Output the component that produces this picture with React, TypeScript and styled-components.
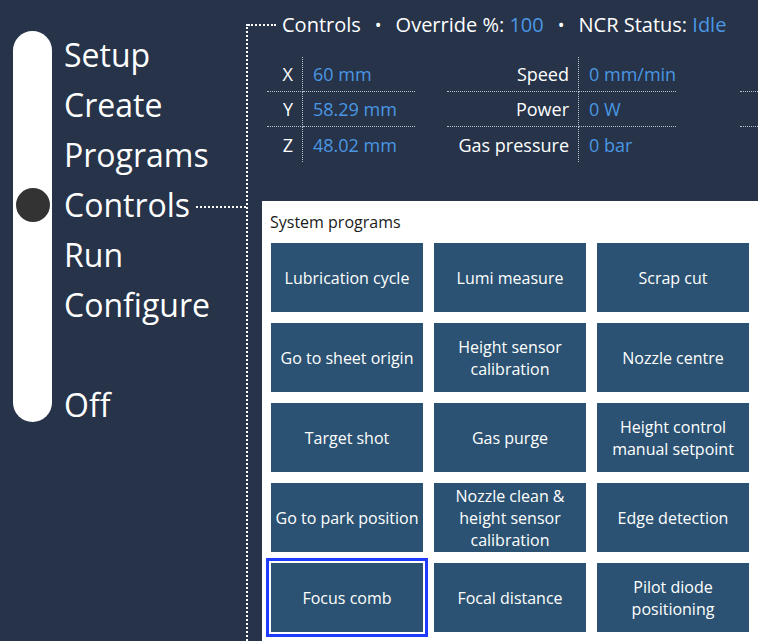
import React from "react";
import styled, { createGlobalStyle } from "styled-components";

const FONT = `"Open Sans", "Noto Sans", "Liberation Sans", sans-serif`;

const Global = createGlobalStyle`
  html, body { margin: 0; padding: 0; background: #263349; }
  body { font-family: ${FONT}; }
  * { box-sizing: border-box; }
`;

const Screen = styled.div`
  display: flex;
  width: 758px;
  height: 641px;
  overflow: hidden;
  background: #263349;
  color: #ffffff;
  font-family: ${FONT};
`;

/* ---------- navigation ---------- */
const Nav = styled.nav`
  display: flex;
  flex: 0 0 246px;
  padding-top: 30px;
`;

const Track = styled.div`
  position: relative;
  flex: 0 0 39px;
  height: 391px;
  margin: 1px 12px 0 13px;
  border-radius: 20px;
  background: #ffffff;
`;

const Knob = styled.div<{ $index: number }>`
  position: absolute;
  left: 3px;
  top: ${(p) => p.$index * 50 + 7}px;
  width: 34px;
  height: 34px;
  border-radius: 50%;
  background: #333333;
`;

const NavList = styled.ul`
  flex: 1;
  margin: 0;
  padding: 0;
  list-style: none;
`;

const NavItem = styled.li<{ $gap?: boolean }>`
  display: flex;
  align-items: center;
  height: 50px;
  margin-top: ${(p) => (p.$gap ? "50px" : "0")};
  font-size: 32px;
  line-height: 50px;
  color: #ffffff;
  white-space: nowrap;
`;

const Connector = styled.span`
  flex: 1;
  margin-left: 6px;
  border-top: 2px dotted #ffffff;
  transform: translateY(2px);
`;

/* ---------- main ---------- */
const Main = styled.main`
  flex: 1;
  display: flex;
  flex-direction: column;
  margin-top: 24px;
  border-left: 2px dotted #ffffff;
  min-width: 0;
`;

const Header = styled.header`
  display: flex;
  align-items: center;
  height: 2px;
  font-size: 20px;
  white-space: nowrap;
  &::before {
    content: "";
    width: 28px;
    margin-right: 6px;
    border-top: 2px dotted #ffffff;
  }
`;

const HeaderItem = styled.span`
  line-height: 26px;
`;

const Bullet = styled.span`
  margin: 0 14px;
  font-size: 18px;
`;

const Value = styled.span`
  color: #4a97e4;
`;

const Readouts = styled.div`
  display: flex;
  gap: 32px;
  margin: 31px 0 0 19px;
  white-space: nowrap;
`;

const Group = styled.div<{ $label: number; $value: number }>`
  display: grid;
  grid-template-columns: ${(p) => `${p.$label}px ${p.$value}px`};
  grid-auto-rows: 35px;
  font-size: 18px;
`;

const Label = styled.div<{ $last?: boolean }>`
  display: flex;
  align-items: center;
  justify-content: flex-end;
  padding-right: 9px;
  border-right: 1px dotted #b8bfca;
  border-bottom: ${(p) => (p.$last ? "none" : "1px dotted #b8bfca")};
`;

const Cell = styled.div<{ $last?: boolean }>`
  display: flex;
  align-items: center;
  padding-left: 10px;
  color: #4a97e4;
  border-bottom: ${(p) => (p.$last ? "none" : "1px dotted #b8bfca")};
`;

const Spacer = styled.div`
  width: 34px;
`;

const Panel = styled.section`
  flex: 1;
  margin: 39px 0 0 14px;
  padding: 10px 0 0 8px;
  background: #ffffff;
  color: #1b1b1b;
`;

const PanelTitle = styled.h2`
  margin: 0;
  font-size: 16px;
  font-weight: 400;
  line-height: 22px;
`;

const ProgramGrid = styled.div`
  display: grid;
  grid-template-columns: repeat(3, 152px);
  grid-auto-rows: 69px;
  gap: 11px;
  margin: 10px 0 0 1px;
`;

const ProgramButton = styled.button<{ $focused?: boolean }>`
  display: flex;
  align-items: center;
  justify-content: center;
  padding: 0 2px;
  border: none;
  background: #2b5272;
  color: #ffffff;
  font-family: ${FONT};
  font-size: 16px;
  line-height: 22px;
  text-align: center;
  box-shadow: ${(p) =>
    p.$focused ? "0 0 0 2px #ffffff, 0 0 0 5px #1f3bff" : "none"};
`;

const navItems = ["Setup", "Create", "Programs", "Controls", "Run", "Configure"];

const axes = [
  ["X", "60 mm"],
  ["Y", "58.29 mm"],
  ["Z", "48.02 mm"],
];

const process = [
  ["Speed", "0 mm/min"],
  ["Power", "0 W"],
  ["Gas pressure", "0 bar"],
];

const programs = [
  "Lubrication cycle",
  "Lumi measure",
  "Scrap cut",
  "Go to sheet origin",
  "Height sensor calibration",
  "Nozzle centre",
  "Target shot",
  "Gas purge",
  "Height control manual setpoint",
  "Go to park position",
  "Nozzle clean & height sensor calibration",
  "Edge detection",
  "Focus comb",
  "Focal distance",
  "Pilot diode positioning",
];

export default function App() {
  const active = 3;
  return (
    <>
      <Global />
      <Screen>
        <Nav>
          <Track>
            <Knob $index={active} />
          </Track>
          <NavList>
            {navItems.map((item, i) => (
              <NavItem key={item}>
                {item}
                {i === active && <Connector />}
              </NavItem>
            ))}
            <NavItem $gap>Off</NavItem>
          </NavList>
        </Nav>
        <Main>
          <Header>
            <HeaderItem>Controls</HeaderItem>
            <Bullet>•</Bullet>
            <HeaderItem>
              Override %: <Value>100</Value>
            </HeaderItem>
            <Bullet>•</Bullet>
            <HeaderItem>
              NCR Status: <Value>Idle</Value>
            </HeaderItem>
          </Header>
          <Readouts>
            <Group $label={36} $value={112}>
              {axes.map(([l, v], i) => (
                <React.Fragment key={l}>
                  <Label $last={i === 2}>{l}</Label>
                  <Cell $last={i === 2}>{v}</Cell>
                </React.Fragment>
              ))}
            </Group>
            <Group $label={132} $value={97}>
              {process.map(([l, v], i) => (
                <React.Fragment key={l}>
                  <Label $last={i === 2}>{l}</Label>
                  <Cell $last={i === 2}>{v}</Cell>
                </React.Fragment>
              ))}
            </Group>
            <Spacer />
            <Group $label={120} $value={100}>
              {[0, 1, 2].map((i) => (
                <React.Fragment key={i}>
                  <Label $last={i === 2} />
                  <Cell $last={i === 2} />
                </React.Fragment>
              ))}
            </Group>
          </Readouts>
          <Panel>
            <PanelTitle>System programs</PanelTitle>
            <ProgramGrid>
              {programs.map((p) => (
                <ProgramButton key={p} $focused={p === "Focus comb"}>
                  {p}
                </ProgramButton>
              ))}
            </ProgramGrid>
          </Panel>
        </Main>
      </Screen>
    </>
  );
}
